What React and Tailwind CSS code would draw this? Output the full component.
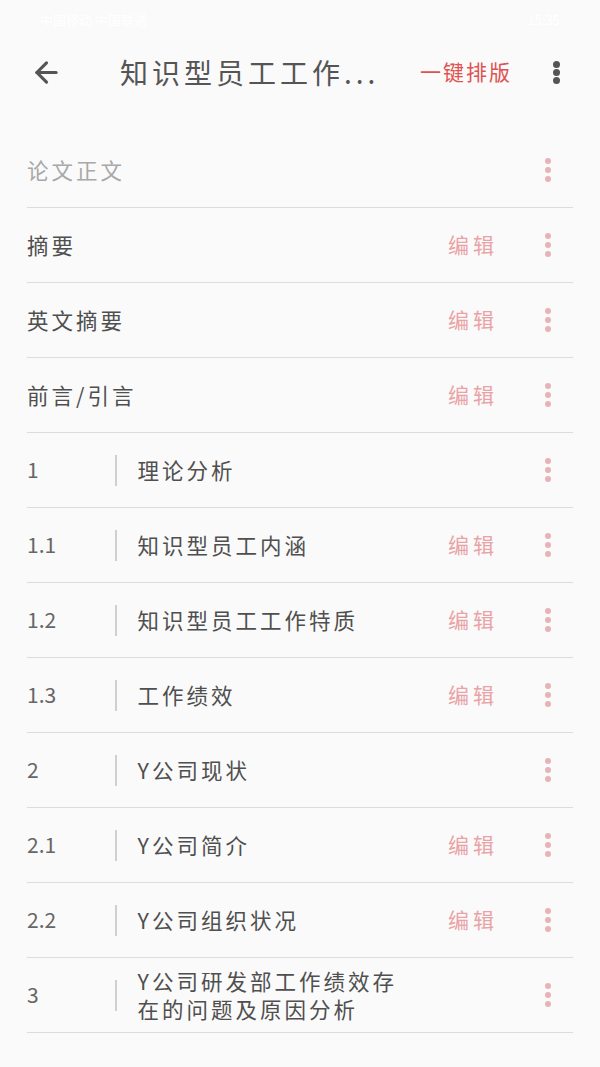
import { ArrowLeft } from 'lucide-react';

const rows = [
  { num: null, title: '论文正文', muted: true, edit: false },
  { num: null, title: '摘要', edit: true },
  { num: null, title: '英文摘要', edit: true },
  { num: null, title: '前言/引言', edit: true },
  { num: '1', title: '理论分析', edit: false },
  { num: '1.1', title: '知识型员工内涵', edit: true },
  { num: '1.2', title: '知识型员工工作特质', edit: true },
  { num: '1.3', title: '工作绩效', edit: true },
  { num: '2', title: 'Y公司现状', edit: false },
  { num: '2.1', title: 'Y公司简介', edit: true },
  { num: '2.2', title: 'Y公司组织状况', edit: true },
  { num: '3', title: ['Y公司研发部工作绩效存', '在的问题及原因分析'], edit: false },
];

function Dots({ color, size = 'w-[6px] h-[6px]', gap = 'gap-[3px]' }) {
  return (
    <div className={`flex flex-col items-center ${gap}`}>
      <span className={`${size} rounded-full ${color}`} />
      <span className={`${size} rounded-full ${color}`} />
      <span className={`${size} rounded-full ${color}`} />
    </div>
  );
}

function Row({ row }) {
  return (
    <div className="h-[75px] flex items-center border-b border-[#dcdcdc]">
      {row.num !== null && (
        <div className="flex items-center">
          <span className="w-[88px] text-[21px] text-[#666]">{row.num}</span>
          <span className="w-[1.5px] h-[31px] bg-[#cfcfcf] mr-[21px]" />
        </div>
      )}
      <div
        className={`flex-1 text-[21.5px] tracking-[3px] leading-[28px] ${row.muted ? 'text-[#a8a8a8]' : 'text-[#4f4f4f]'}`}
      >
        {Array.isArray(row.title) ? row.title.map((t) => <div key={t}>{t}</div>) : row.title}
      </div>
      {row.edit && (
        <span className="text-[21px] tracking-[4px] text-[#e9a3a6] mr-[25px]">编辑</span>
      )}
      <div className="w-[50px] flex justify-center">
        <Dots color="bg-[#e8b3b6]" />
      </div>
    </div>
  );
}

export default function App() {
  return (
    <div
      className="w-[600px] h-[1067px] bg-[#fafafa] overflow-hidden"
      style={{ fontFamily: '"Noto Sans CJK SC", "Noto Sans", sans-serif' }}
    >
      {/* status bar */}
      <div className="h-[40px] flex items-center justify-between px-[40px] text-[#ffffff] text-[13px]">
        <span>中国移动 中国联通</span>
        <span>15:35</span>
      </div>

      {/* header */}
      <div className="h-[64px] flex items-center">
        <div className="w-[92px] flex justify-center">
          <ArrowLeft size={33} strokeWidth={2.3} className="text-[#555]" />
        </div>
        <div className="w-[296px] ml-[28px] text-[28px] tracking-[4px] text-[#555] whitespace-nowrap">
          知识型员工工作...
        </div>
        <span className="ml-[4px] text-[21px] text-[#e05252] tracking-[2px]">一键排版</span>
        <div className="flex-1 flex justify-center">
          <Dots color="bg-[#555]" size="w-[7px] h-[7px]" gap="gap-[1px]" />
        </div>
      </div>

      {/* list */}
      <div className="mt-[29px] mx-[27px]">
        {rows.map((row, i) => (
          <Row key={i} row={row} />
        ))}
      </div>
    </div>
  );
}
